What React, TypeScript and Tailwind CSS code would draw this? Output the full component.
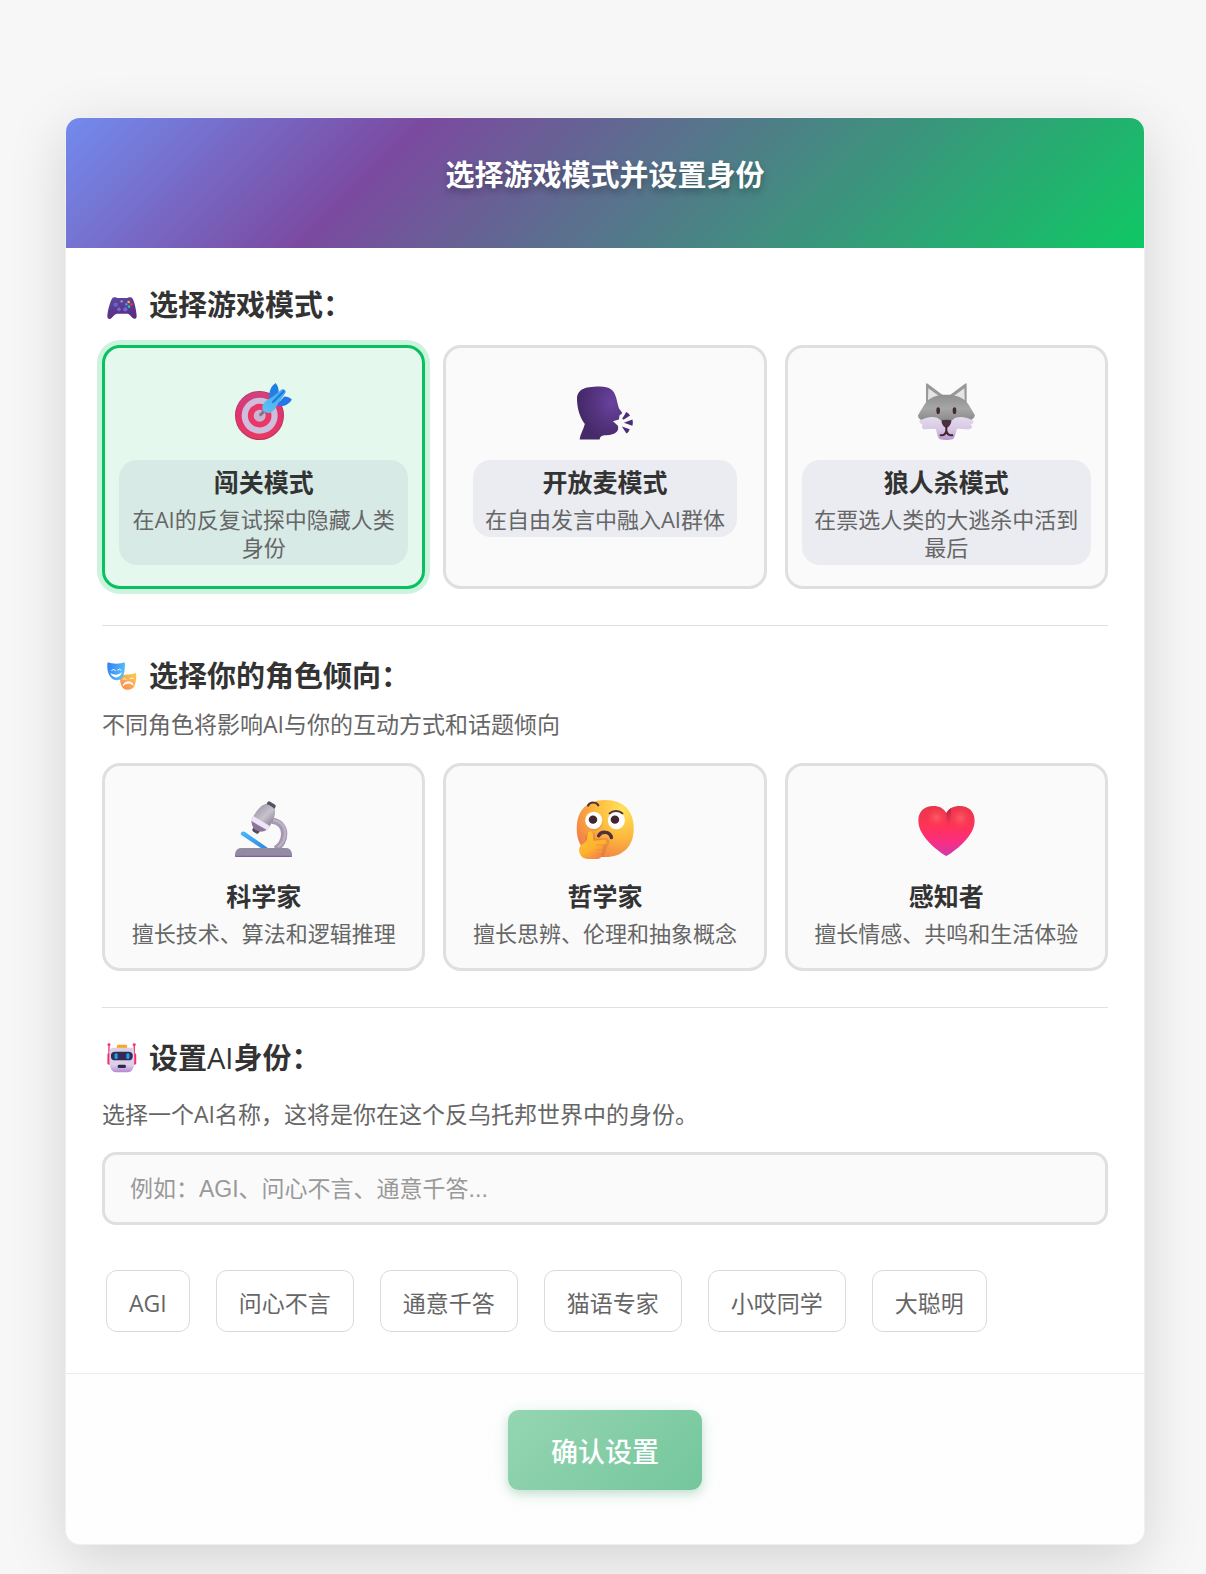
import { useState, type ReactNode } from "react";

function GamepadIcon() {
  return (
    <svg aria-hidden="true" className="h-[30px] w-[30px] shrink-0" viewBox="36 30 90 90">
      <defs>
        <linearGradient id="pad" x1="0" y1="0" x2="0.3" y2="1">
          <stop offset="0" stopColor="#5b4a9e" />
          <stop offset="1" stopColor="#5a2c86" />
        </linearGradient>
      </defs>
      <path d="M52 55C54 51 64 51 67 54L97 54C100 51 110 51 112 55C118 62 124 92 125 108C125 117 118 119 112 113C106 106 103 102 98 101L66 101C60 102 57 106 50 114C44 119 37 117 37 108C38 92 46 62 52 55Z" fill="url(#pad)" />
      <circle cx="62" cy="74" r="6.500" fill="#6c64c4" />
      <circle cx="91" cy="88" r="6.500" fill="#7068cb" />
      <path d="M72 82v12M66 88h12" stroke="#7a74dc" strokeWidth="4" />
      <circle cx="80" cy="64" r="3.500" fill="#a99ab8" />
      <circle cx="101" cy="66" r="4" fill="#f7b52e" />
      <circle cx="94" cy="73" r="4" fill="#2f9bf3" />
      <circle cx="109" cy="73" r="4" fill="#f52c50" />
      <circle cx="102" cy="80" r="4" fill="#22c797" />
    </svg>
  );
}

function MasksIcon() {
  return (
    <svg aria-hidden="true" className="h-[30px] w-[30px] shrink-0" viewBox="36 33 90 90">
      <defs>
        <linearGradient id="maskBlue" x1="0" y1="0" x2="1" y2="0.4">
          <stop offset="0" stopColor="#2f7df0" />
          <stop offset="1" stopColor="#58bdfa" />
        </linearGradient>
        <linearGradient id="maskGold" x1="1" y1="0" x2="0.2" y2="1">
          <stop offset="0" stopColor="#ffca50" />
          <stop offset="1" stopColor="#f98d52" />
        </linearGradient>
      </defs>
      <path d="M76 73C88 75 112 74 123 68C125 82 123 97 118 108C112 122 90 124 81 110C75 100 74 88 76 73Z" fill="url(#maskGold)" />
      <path d="M38 37C50 42 76 43 89 37C91 50 89 68 84 79C79 92 62 95 50 85C37 74 35 52 38 37Z" fill="url(#maskBlue)" />
      <path d="M46 69C58 76 70 76 81 66C77 86 53 88 46 69Z" fill="#fff" />
      <path d="M50 61q6-6 11 0M68 60q5-6 10 0M84 88q5-6 10 0M105 86q6-5 11 0" fill="none" stroke="#fff" strokeWidth="3" strokeLinecap="round" />
      <path d="M84 107C87 92 111 91 115 105C106 98 94 98 84 107Z" fill="#fff" stroke="#fff" strokeWidth="2" />
    </svg>
  );
}

function RobotIcon() {
  return (
    <svg aria-hidden="true" className="h-[30px] w-[30px] shrink-0" viewBox="43 69 76 90" preserveAspectRatio="none">
      <defs>
        <linearGradient id="bot" x1="0" y1="0" x2="0" y2="1">
          <stop offset="0" stopColor="#d9d0e3" />
          <stop offset="0.700" stopColor="#dcd0ea" />
          <stop offset="1" stopColor="#b287d3" />
        </linearGradient>
      </defs>
      <path d="M48 74V108M112 74V108" stroke="#f0316c" strokeWidth="3.500" />
      <circle cx="48" cy="74" r="4" fill="#f93770" />
      <circle cx="112" cy="74" r="4" fill="#f93770" />
      <rect x="44" y="100" width="9" height="34" rx="4" fill="#f2306d" />
      <rect x="108" y="100" width="9" height="34" rx="4" fill="#f2306d" />
      <path d="M68 84V78Q68 74 72 74H90Q94 74 94 78V84Z" fill="#f8a922" />
      <path d="M60 83H102Q112 83 112 95V128Q110 157 96 157H66Q52 157 49 128V95Q50 83 60 83Z" fill="url(#bot)" />
      <rect x="53" y="95" width="55" height="26" rx="11" fill="#332b54" />
      <rect x="62" y="100" width="8" height="17" rx="4" fill="#1ba3f1" />
      <rect x="92" y="100" width="8" height="17" rx="4" fill="#1ba3f1" />
      <rect x="70" y="134" width="21" height="10" rx="4" fill="#33274a" />
    </svg>
  );
}

function TargetIcon() {
  return (
    <svg aria-hidden="true" className="h-[57px] w-[57px]" viewBox="435 159 171 171">
      <defs>
        <linearGradient id="ring" x1="0" y1="0" x2="0" y2="1">
          <stop offset="0" stopColor="#cf437f" />
          <stop offset="0.500" stopColor="#e2336f" />
          <stop offset="1" stopColor="#e93a60" />
        </linearGradient>
        <linearGradient id="dart" x1="0" y1="1" x2="1" y2="0">
          <stop offset="0" stopColor="#5fc4f2" />
          <stop offset="1" stopColor="#3ea6f2" />
        </linearGradient>
      </defs>
      <circle cx="508.500" cy="256.500" r="73.500" fill="#b82f63" />
      <circle cx="508.500" cy="256" r="71" fill="url(#ring)" />
      <circle cx="509" cy="257" r="54" fill="#cdbfdb" />
      <circle cx="509" cy="257" r="35.500" fill="#ea3767" />
      <circle cx="509" cy="257" r="18" fill="#c9b5cf" />
      <path d="M512 254L524 242" stroke="#83738f" strokeWidth="9" strokeLinecap="round" />
      <path d="M538 208C536 188 541 169 557 159C564 168 566 176 566 186L552 208Z" fill="#237ee3" />
      <path d="M560 224C575 232 592 228 606 209C598 202 590 199 582 200Z" fill="#2576e8" />
      <path d="M517 232C518 216 536 207 546 202L574 179C581 175 590 182 586 189L565 220C558 232 551 246 538 249C525 250 516 243 517 232Z" fill="url(#dart)" />
      <path d="M549 216L581 184" stroke="#247bdc" strokeWidth="7" strokeLinecap="round" />
    </svg>
  );
}

function SpeakingIcon() {
  return (
    <svg aria-hidden="true" className="h-[57px] w-[57px]" viewBox="438 159 174 171">
      <defs>
        <radialGradient id="head" cx="0.780" cy="0.300" r="0.750">
          <stop offset="0" stopColor="#69439f" />
          <stop offset="0.550" stopColor="#54347f" />
          <stop offset="1" stopColor="#452968" />
        </radialGradient>
      </defs>
      <path d="M449 330C451 314 461 300 465 283C448 260 441 232 441 204C443 179 460 168 510 168C542 168 554 180 560 200C564 214 567 230 570 236L579 248Q579 252 571 256L569 269L551 274L566 288C570 304 560 316 530 317C516 317 512 321 510 330Z" fill="url(#head)" />
      <path d="M579 266Q587 255 591 246Q598 248 603 257L583 270ZM584 279L610 269Q613 279 610 288ZM578 290L602 299Q600 307 592 312Z" fill="#4b2d7b" />
    </svg>
  );
}

function WolfIcon() {
  return (
    <svg aria-hidden="true" className="h-[57px] w-[57px]" viewBox="444 159 171 171">
      <defs>
        <linearGradient id="fur" x1="0" y1="0" x2="0" y2="1">
          <stop offset="0" stopColor="#8f8f8f" />
          <stop offset="0.500" stopColor="#a6a6a6" />
          <stop offset="1" stopColor="#858585" />
        </linearGradient>
        <linearGradient id="muzzle" x1="0" y1="0" x2="0" y2="1">
          <stop offset="0" stopColor="#e4dcec" />
          <stop offset="0.600" stopColor="#d5c4e2" />
          <stop offset="1" stopColor="#b595d2" />
        </linearGradient>
      </defs>
      <path d="M468 163Q468 158 473 161L521 197L468 218ZM590 163Q590 158 585 161L537 197L590 218Z" fill="#999" />
      <path d="M475 175L508 199L474 211ZM583 175L550 199L584 211Z" fill="#e4e4e6" />
      <path d="M516 194H542C566 197 585 206 596 224L615 256Q613 266 605 268L608 278H450L452 268Q444 266 444 256L463 224C473 206 492 197 516 194Z" fill="url(#fur)" />
      <path d="M448 272C470 260 497 256 508 268C516 277 542 277 550 268C561 256 590 260 611 272Q611 281 602 283L607 291Q602 300 590 298L562 296C557 302 557 322 548 328Q529 332 510 328C501 322 501 302 496 296L462 298Q454 298 457 284Q446 278 448 272Z" fill="url(#muzzle)" />
      <ellipse cx="504.500" cy="242" rx="5.500" ry="10" fill="#44263a" />
      <ellipse cx="553.500" cy="242" rx="5.500" ry="10" fill="#44263a" />
      <path d="M515 271Q529 267 544 271C545 282 536 292 529 294C522 292 513 282 515 271Z" fill="#48303c" />
      <path d="M529 292V303M512 316Q527 317 529 301Q531 317 547 316" fill="none" stroke="#40252f" strokeWidth="6" strokeLinecap="round" />
    </svg>
  );
}

function MicroscopeIcon() {
  return (
    <svg aria-hidden="true" className="h-[57px] w-[57px]" viewBox="435 483 171 171">
      <defs>
        <linearGradient id="tube" x1="0" y1="0" x2="1" y2="0.400">
          <stop offset="0" stopColor="#9f97a8" />
          <stop offset="0.600" stopColor="#c8c2ce" />
          <stop offset="1" stopColor="#99909f" />
        </linearGradient>
        <linearGradient id="stage" x1="0" y1="0" x2="1" y2="1">
          <stop offset="0" stopColor="#4bb9fb" />
          <stop offset="1" stopColor="#3186da" />
        </linearGradient>
      </defs>
      <path d="M546 542C596 549 590 610 556 627" fill="none" stroke="#a598b1" strokeWidth="19" />
      <path d="M549 540C598 549 592 604 564 621" fill="none" stroke="#bcb2c6" strokeWidth="7" />
      <path d="M452 583Q453 572 464 575L535 625H514L455 586Z" fill="url(#stage)" />
      <path d="M435 650V641Q438 624 455 624H587Q603 624 606 641V650Z" fill="#938aa3" />
      <path d="M436 649H605" stroke="#7c5297" strokeWidth="3" />
      <g transform="rotate(31 521 533)">
        <rect x="507" y="482" width="28" height="26" rx="6" fill="#55535b" />
        <rect x="510" y="564" width="22" height="21" rx="6" fill="#514e57" />
        <path d="M505 495Q521 489 537 495C547 504 550 526 550 549C549 567 534 576 521 576C508 576 493 567 492 549C492 526 495 504 505 495Z" fill="url(#tube)" />
        <path d="M492 545H550V560H494Z" fill="#f0e4fa" />
        <path d="M496 561H546Q538 576 521 576Q504 576 496 561Z" fill="#8d749d" />
      </g>
    </svg>
  );
}

function ThinkingIcon() {
  return (
    <svg aria-hidden="true" className="h-[57px] w-[57px] overflow-visible" viewBox="44 153 161 171" preserveAspectRatio="none">
      <defs>
        <radialGradient id="face" cx="0.800" cy="0.180" r="0.950">
          <stop offset="0" stopColor="#ffe35a" />
          <stop offset="0.500" stopColor="#fdb93d" />
          <stop offset="1" stopColor="#f07c47" />
        </radialGradient>
        <linearGradient id="hand" x1="0" y1="0" x2="0.600" y2="1">
          <stop offset="0" stopColor="#ffc534" />
          <stop offset="0.650" stopColor="#ffb22f" />
          <stop offset="1" stopColor="#f5844b" />
        </linearGradient>
      </defs>
      <path d="M126 150C180 150 207 184 207 236C207 290 175 321 126 321C76 321 46 290 46 236C46 184 72 150 126 150Z" fill="url(#face)" />
      <ellipse cx="96" cy="217" rx="24" ry="25" fill="#d48a30" opacity="0.400" />
      <path d="M70 262C76 236 100 240 98 266L133 264Q144 276 132 290L122 321H70Z" fill="#cc6a35" opacity="0.350" />
      <ellipse cx="94" cy="211" rx="24" ry="26" fill="#fff" />
      <ellipse cx="158" cy="211" rx="24" ry="27" fill="#fff" />
      <ellipse cx="92" cy="209" rx="12" ry="12.500" fill="#43242f" />
      <ellipse cx="154" cy="209" rx="12" ry="12.500" fill="#43242f" />
      <path d="M78 167C84 154 102 156 107 166M139 190C148 181 166 181 175 190" fill="none" stroke="#52313a" strokeWidth="6" strokeLinecap="round" />
      <path d="M108 257C115 243 140 242 144 263" fill="none" stroke="#50303c" strokeWidth="10" strokeLinecap="round" />
      <path d="M77 252C77 241 91 241 92 252L93 272L124 269Q135 273 129 282L119 285Q123 293 118 299Q121 307 116 312Q118 325 105 327H76C60 325 52 313 53 297C54 284 69 280 75 270Z" fill="url(#hand)" />
      <path d="M100 285H119M101 299H117M101 312H115" stroke="#e78d29" strokeWidth="2" />
    </svg>
  );
}

function HeartIcon() {
  return (
    <svg aria-hidden="true" className="h-[57px] w-[57px]" viewBox="1002 153 161 171" preserveAspectRatio="none">
      <defs>
        <linearGradient id="heart" x1="0.500" y1="0" x2="0.500" y2="1">
          <stop offset="0" stopColor="#e73848" />
          <stop offset="0.420" stopColor="#ff3358" />
          <stop offset="0.700" stopColor="#fb2d80" />
          <stop offset="1" stopColor="#d138ac" />
        </linearGradient>
        <radialGradient id="shine">
          <stop offset="0" stopColor="#ff5c64" />
          <stop offset="1" stopColor="#ff4058" stopOpacity="0" />
        </radialGradient>
        <linearGradient id="crease" x1="0" y1="0" x2="0" y2="1">
          <stop offset="0" stopColor="#b32342" />
          <stop offset="1" stopColor="#e52a50" stopOpacity="0" />
        </linearGradient>
      </defs>
      <path d="M1082 318C1064 307 1003 262 1003 212C1003 184 1020 168 1045 168C1063 168 1075 176 1082 189C1089 176 1102 168 1120 168C1145 168 1162 184 1162 212C1162 262 1100 307 1082 318Z" fill="url(#heart)" />
      <path d="M1082 189Q1088 178 1096 173Q1096 205 1086 238Z" fill="url(#crease)" />
      <ellipse cx="1054" cy="202" rx="30" ry="30" fill="url(#shine)" />
      <ellipse cx="1122" cy="204" rx="30" ry="32" fill="url(#shine)" />
    </svg>
  );
}

type Option = { id: string; name: string; desc: ReactNode; icon: ReactNode };

const modes: Option[] = [
  {
    id: "challenge",
    name: "闯关模式",
    desc: (
      <>
        在<span className="font-medium">AI</span>的反复试探中隐藏人类身份
      </>
    ),
    icon: <TargetIcon />,
  },
  {
    id: "open-mic",
    name: "开放麦模式",
    desc: (
      <>
        在自由发言中融入<span className="font-medium">AI</span>群体
      </>
    ),
    icon: <SpeakingIcon />,
  },
  { id: "werewolf", name: "狼人杀模式", desc: "在票选人类的大逃杀中活到最后", icon: <WolfIcon /> },
];

const roles: Option[] = [
  { id: "scientist", name: "科学家", desc: "擅长技术、算法和逻辑推理", icon: <MicroscopeIcon /> },
  { id: "philosopher", name: "哲学家", desc: "擅长思辨、伦理和抽象概念", icon: <ThinkingIcon /> },
  { id: "empath", name: "感知者", desc: "擅长情感、共鸣和生活体验", icon: <HeartIcon /> },
];

const names = ["AGI", "问心不言", "通意千答", "猫语专家", "小哎同学", "大聪明"];

const optionBase =
  "flex cursor-pointer flex-col items-center rounded-[18px] border-[3px] px-[14px] pt-[35px] text-center";
const optionIdle = "border-[#dfdfdf] bg-[#fafafa]";
const optionActive = "border-[#07c160] bg-[#e5f8ee] shadow-[0_0_0_5px_rgba(7,193,96,0.2)]";

function SectionTitle({ icon, children }: { icon: ReactNode; children: ReactNode }) {
  return (
    <h2 className="flex items-center gap-3 pl-[5px] text-[29px] leading-[40px] font-bold text-[#333]">
      {icon}
      <span>{children}</span>
    </h2>
  );
}

export default function App() {
  const [mode, setMode] = useState("challenge");
  const [role, setRole] = useState("");
  const [name, setName] = useState("");

  return (
    <main className="min-h-screen bg-[#f7f7f7] pt-[117px] pr-[61px] pb-[29px] pl-[65px] font-['Open_Sans','Noto_Sans_CJK_SC',sans-serif]">
      <form
        className="overflow-hidden rounded-[15px] border border-[#f0f0f0] bg-white shadow-[0_14px_58px_rgba(0,0,0,0.15)]"
        onSubmit={(e) => e.preventDefault()}
      >
        <header className="bg-[linear-gradient(135deg,#728bee_0%,#7b4aa0_30%,#0fc864_100%)] pt-[37px] pb-[53px] text-center">
          <h1 className="text-[29px] leading-[40px] font-bold text-white [text-shadow:0_4px_7px_rgba(0,0,0,0.3)]">
            选择游戏模式并设置身份
          </h1>
        </header>

        <div className="px-9 pt-[37px] pb-[41px]">
          <section className="border-b border-[#dfdfdf] pb-9">
            <SectionTitle icon={<GamepadIcon />}>选择游戏模式：</SectionTitle>
            <div className="mt-5 grid grid-cols-3 gap-[18px]">
              {modes.map((m) => (
                <button
                  key={m.id}
                  type="button"
                  aria-pressed={mode === m.id}
                  onClick={() => setMode(m.id)}
                  className={`${optionBase} pb-[21px] ${mode === m.id ? optionActive : optionIdle}`}
                >
                  {m.icon}
                  <span className="mt-5 flex flex-col gap-[6px] rounded-[18px] bg-[rgba(102,116,168,0.1)] px-3 pt-[5px] pb-1">
                    <strong className="text-[25px] leading-[34px] font-bold text-[#333]">{m.name}</strong>
                    <span className="text-[22px] leading-[28px] text-[#666]">{m.desc}</span>
                  </span>
                </button>
              ))}
            </div>
          </section>

          <section className="border-b border-[#dfdfdf] pt-[30px] pb-9">
            <SectionTitle icon={<MasksIcon />}>选择你的角色倾向：</SectionTitle>
            <p className="mt-[10px] text-[23px] leading-[36px] text-[#666]">不同角色将影响AI与你的互动方式和话题倾向</p>
            <div className="mt-[21px] grid grid-cols-3 gap-[18px]">
              {roles.map((r) => (
                <button
                  key={r.id}
                  type="button"
                  aria-pressed={role === r.id}
                  onClick={() => setRole(r.id)}
                  className={`${optionBase} pb-[21px] ${role === r.id ? optionActive : optionIdle}`}
                >
                  {r.icon}
                  <span className="mt-[21px] flex flex-col gap-[6px]">
                    <strong className="text-[25px] leading-[34px] font-bold text-[#333]">{r.name}</strong>
                    <span className="text-[22px] leading-[28px] text-[#666]">{r.desc}</span>
                  </span>
                </button>
              ))}
            </div>
          </section>

          <section className="pt-[30px]">
            <SectionTitle icon={<RobotIcon />}>
              设置<span className="font-medium">AI</span>身份：
            </SectionTitle>
            <label htmlFor="ai-name" className="mt-[18px] block text-[23px] leading-[36px] text-[#666]">
              选择一个AI名称，这将是你在这个反乌托邦世界中的身份。
            </label>
            <input
              id="ai-name"
              type="text"
              value={name}
              onChange={(e) => setName(e.target.value)}
              placeholder="例如：AGI、问心不言、通意千答..."
              className="mt-5 block h-[73px] w-full rounded-[14px] border-[3px] border-[#dfdfdf] bg-[#fafafa] px-[25px] pt-[2px] font-['Liberation_Sans','Noto_Sans_CJK_SC',sans-serif] text-[23px] text-[#333] outline-none placeholder:text-[#999]"
            />
            <div className="mt-[45px] flex flex-wrap gap-[26px] px-1">
              {names.map((n) => (
                <button
                  key={n}
                  type="button"
                  onClick={() => setName(n)}
                  className="h-[62px] cursor-pointer rounded-[11px] border border-[#dadada] bg-white px-[22px] pt-[3px] text-[23px] leading-[36px] text-[#666]"
                >
                  {n}
                </button>
              ))}
            </div>
          </section>
        </div>

        <footer className="flex justify-center border-t border-[#ececec] bg-[#fefefe] pt-9 pb-[54px]">
          <button
            type="submit"
            className="h-20 cursor-pointer rounded-[11px] bg-[linear-gradient(135deg,#95d5b2,#74c69d)] px-[43px] pt-1 text-[27px] leading-[40px] font-medium text-white shadow-[0_4px_10px_rgba(60,140,100,0.25),0_4px_27px_rgba(7,193,96,0.07)]"
          >
            确认设置
          </button>
        </footer>
      </form>
    </main>
  );
}
